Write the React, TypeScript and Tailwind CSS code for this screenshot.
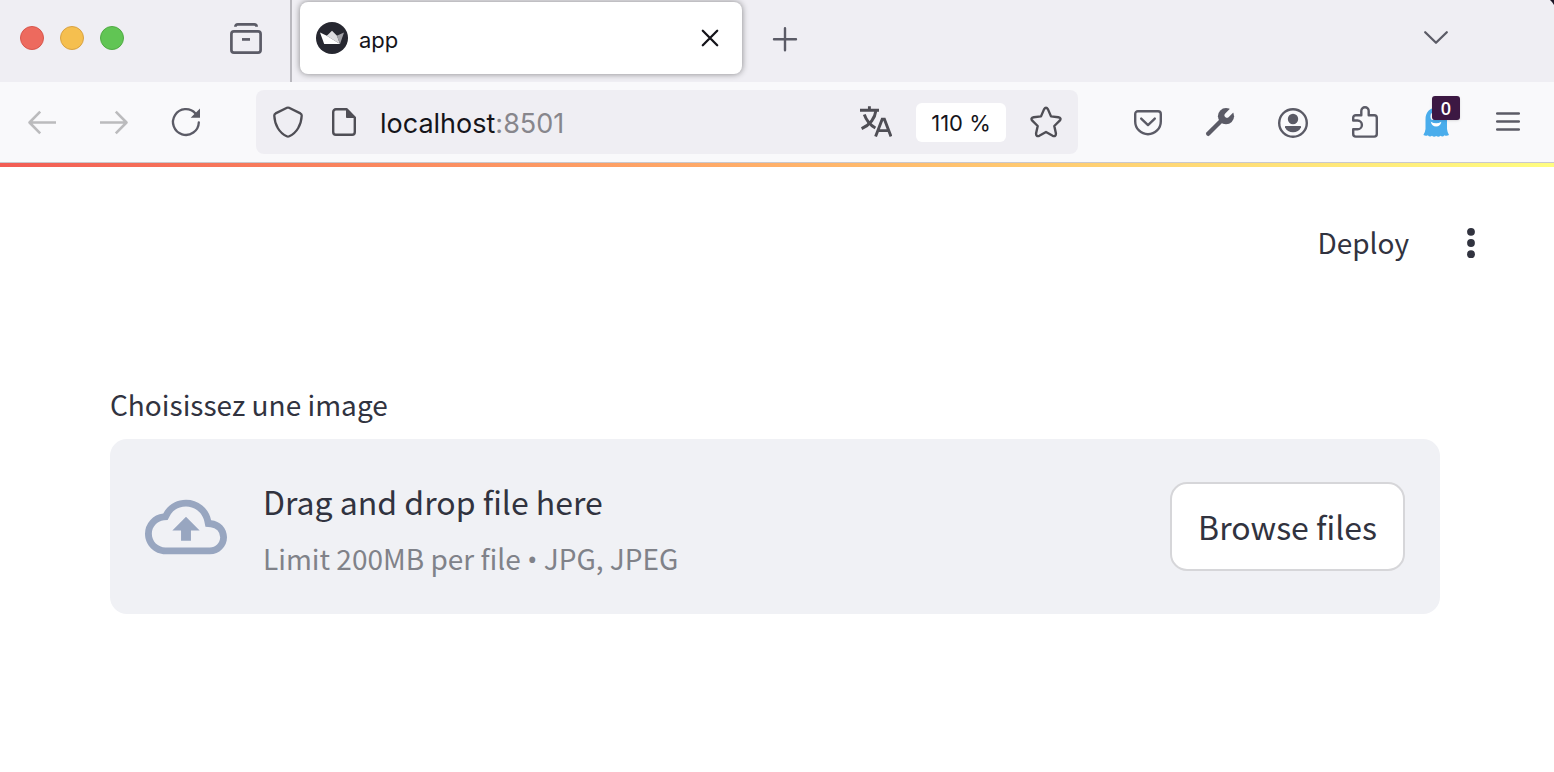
import type { ReactNode } from "react";

type IconProps = { children: ReactNode; color?: string; width?: number };

function Icon({ children, color = "#5b5b66", width = 2.4 }: IconProps) {
  return (
    <svg
      className="block h-8 w-8 shrink-0"
      viewBox="0 0 32 32"
      fill="none"
      stroke={color}
      strokeWidth={width}
      strokeLinecap="round"
      strokeLinejoin="round"
      aria-hidden="true"
    >
      {children}
    </svg>
  );
}

function IconButton({ label, children }: { label: string; children: ReactNode }) {
  return (
    <button type="button" aria-label={label} className="relative block h-8 w-8 shrink-0">
      {children}
    </button>
  );
}

function TabStrip() {
  return (
    <div className="relative flex h-[82px] items-stretch bg-[#efeef3]">
      <div className="flex items-center gap-4 pb-[6px] pl-5">
        <button type="button" aria-label="Close window" className="h-6 w-6 rounded-full border border-[#d8564c] bg-[#ed6a5e]" />
        <button type="button" aria-label="Minimize window" className="h-6 w-6 rounded-full border border-[#d9a243] bg-[#f5bf4f]" />
        <button type="button" aria-label="Zoom window" className="h-6 w-6 rounded-full border border-[#51ab44] bg-[#61c554]" />
      </div>
      <div className="ml-[106px] flex items-center pb-[6px]">
        <IconButton label="Recent browsing">
          <Icon width={2.7}>
            <rect x="1.4" y="9.4" width="29.2" height="21.2" rx="2.6" />
            <path d="M5.4 4.7c0-1.6.8-2.3 2.4-2.3h16.4c1.6 0 2.4.7 2.4 2.3" strokeLinecap="butt" />
            <path d="M12 17.4h8" strokeLinecap="butt" />
          </Icon>
        </IconButton>
      </div>
      <div className="ml-7 w-[2px] bg-[#b9b8be]" />
      <div className="mb-2 ml-2 mt-[2px] flex w-[442px] items-center rounded-lg bg-white px-4 shadow-[0_0_6px_rgba(0,0,0,0.45)]">
        <svg className="h-8 w-8 shrink-0" viewBox="0 0 32 32" aria-hidden="true">
          <circle cx="16" cy="16" r="16" fill="#262730" />
          <path d="M10.800 13.800L16 8.700l5 5.100 3 8.200z" fill="#dcdcdf" />
          <path d="M20.800 13.800l7.200-3.200L24 22z" fill="#a0a0a5" />
          <path d="M4 10.600l6.800 3.200L24 22H8.200z" fill="#fff" />
        </svg>
        <span className="ml-[11px] flex-1 pt-1 text-[22px] leading-7 text-[#15141a]">app</span>
        <IconButton label="Close tab">
          <Icon color="#15141a" width={2.3}>
            <path d="M8.8 8.8l14.400 14.400M23.200 8.800L8.800 23.200" />
          </Icon>
        </IconButton>
      </div>
      <div className="ml-[27px] flex flex-1 items-center justify-between pb-1 pr-[102px]">
        <IconButton label="New tab">
          <Icon>
            <path d="M16 5.200v22M5 16.200h22" />
          </Icon>
        </IconButton>
        <IconButton label="List all tabs">
          <Icon width={2.3}>
            <path d="M5.200 9.200L16 19.800 26.800 9.200" />
          </Icon>
        </IconButton>
      </div>
      <svg className="absolute right-0 top-0 h-[5px] w-1" viewBox="0 0 4 5" aria-hidden="true">
        <path d="M0 0h4v5Q2.500 2 0 0z" fill="#1c1626" />
      </svg>
    </div>
  );
}

function AddressBar() {
  return (
    <div className="flex h-16 flex-1 items-center rounded-lg bg-[#efeef3] px-4">
      <IconButton label="Tracking protection">
        <Icon color="#4f4e55" width={2.3}>
          <path d="M15 1.8q1-.5 2 0l11.400 5.600q1.400.8 1.300 2.400C29.300 19 24.600 27 17.300 30.300q-1.300.6-2.600 0C7.400 27 2.700 19 2.300 9.800q-.1-1.600 1.300-2.400z" />
        </Icon>
      </IconButton>
      <div className="ml-6">
        <IconButton label="Site information">
          <Icon color="#4f4e55" width={2.4}>
            <path d="M18.500 3.200H7.900a2.700 2.700 0 0 0-2.700 2.700v20.200a2.700 2.700 0 0 0 2.700 2.700h16.200a2.700 2.700 0 0 0 2.700-2.700V11.500z" />
            <path d="M18.500 3.200v8.300h8.300z" fill="#4f4e55" strokeWidth="1" />
          </Icon>
        </IconButton>
      </div>
      <div className="ml-5 flex-1 pt-1 text-[27px] leading-8 text-[#15141a]">
        localhost<span className="text-[#87868c]">:8501</span>
      </div>
      <IconButton label="Translate page">
        <Icon color="#4f4e55" width={2.9}>
          <g strokeLinecap="butt" strokeLinejoin="miter">
            <path d="M0 4.200h19M9.400.2v4" />
            <path d="M16 4.200C15 12 9.500 19 1.600 22.600" />
            <path d="M4.300 8.500C6.200 14 10 19 15.400 22" />
            <path d="M15.600 30.400L22.200 13.200h2.200L31 30.400M18 24.600h10.600" />
          </g>
        </Icon>
      </IconButton>
      <button type="button" className="ml-6 flex h-[39px] w-[90px] items-center justify-center rounded-md bg-white pt-[2px] text-[22px] leading-7 text-[#15141a]">
        110 %
      </button>
      <div className="ml-6">
        <IconButton label="Bookmark this page">
          <Icon color="#4f4e55" width={2.400}>
            <path d="M14 3.400q2-3.200 4 0l3 7 7.300.8q3.500.7 1.400 3.500L24.300 20l1.600 7.300q.2 3.700-3.200 2.500L16 26l-6.700 3.800q-3.400 1.200-3.200-2.500L7.700 20l-5.400-5.300q-2.100-2.800 1.400-3.500l7.300-.8z" />
          </Icon>
        </IconButton>
      </div>
    </div>
  );
}

function NavBar() {
  return (
    <div className="flex h-[81px] items-center gap-[54px] border-b border-[#c9c8ce] bg-[#f9f9fb] pl-[26px] pr-[30px]">
      <div className="flex gap-10">
        <IconButton label="Go back">
          <Icon color="#bbbbbd" width={2.600}>
            <path d="M30 16.500H3.500M14.200 5.700L3.500 16.500l10.700 10.800" strokeLinecap="butt" />
          </Icon>
        </IconButton>
        <IconButton label="Go forward">
          <Icon color="#bbbbbd" width={2.600}>
            <path d="M2 16.500h26.500M17.800 5.700l10.700 10.800-10.700 10.800" strokeLinecap="butt" />
          </Icon>
        </IconButton>
        <IconButton label="Reload">
          <Icon width={2.300}>
            <path d="M28.800 16.500A12.900 12.900 0 1 1 25.500 7.400" />
            <path d="M30 2.400v9.300h-9.300z" fill="#5b5b66" stroke="none" />
          </Icon>
        </IconButton>
      </div>
      <AddressBar />
      <div className="flex gap-10">
        <IconButton label="Save to Pocket">
          <Icon>
            <path d="M5.900 5.200h20.200a2.700 2.700 0 0 1 2.700 2.700v7.500a12.800 12.800 0 0 1-25.600 0V7.900a2.700 2.700 0 0 1 2.700-2.700z" />
            <path d="M9.200 12.600l6.800 6.500 6.800-6.500" />
          </Icon>
        </IconButton>
        <IconButton label="Developer tools">
          <Icon>
            <path d="M4.200 27.800L17.500 14.500" strokeWidth="4.400" />
            <circle cx="22" cy="10.200" r="8.100" fill="#5b5b66" stroke="none" />
            <path d="M23 9.200l8-8" stroke="#f9f9fb" strokeWidth="5" />
          </Icon>
        </IconButton>
        <IconButton label="Account">
          <Icon>
            <circle cx="17" cy="17" r="13.800" />
            <g fill="#5b5b66" stroke="none">
              <circle cx="17" cy="13" r="5.200" />
              <path d="M9.800 20h14.400q1.200 0 .8 1.200C23.800 24.500 20.500 26.200 17 26.200s-6.800-1.700-8-5q-.4-1.200.8-1.200z" />
            </g>
          </Icon>
        </IconButton>
        <IconButton label="Extensions">
          <Icon>
            <path d="M13.300 9.200V5a3.700 3.700 0 0 1 7.400 0v4.200h5.500a2.600 2.600 0 0 1 2.600 2.600V28a2.600 2.600 0 0 1-2.600 2.600H7.800A2.600 2.600 0 0 1 5.200 28v-4.700h4.300a4.400 4.400 0 0 0 0-8.800H5.200v-2.700a2.600 2.600 0 0 1 2.600-2.600z" />
          </Icon>
        </IconButton>
        <IconButton label="Ghostery, 0 trackers blocked">
          <Icon>
            <path
              d="M5.500 13.500C5.500 6 10 1.800 16.200 1.800S27 6 27 13.500v9.500q.4 3.500 2 6-2.500 1.500-4.500.200-1.800 2.300-4 .6-2 1.800-4.300.2-2.200 1.600-4.200-.2-2.300 1.700-4.200-.6-2 1.300-4.400-.2 1.700-2.500 2.100-6z"
              fill="#4aadec"
              stroke="none"
            />
            <g fill="#fff" stroke="none">
              <ellipse cx="12.500" cy="10.500" rx="2" ry="3.400" />
              <path d="M10.800 15.800q5.300 3 10.600 0-1 4.800-5.300 4.800t-5.300-4.800z" />
            </g>
          </Icon>
          <span className="absolute -top-[10px] left-3 flex h-6 w-7 items-center justify-center rounded-[3px] bg-[#3c1843] font-['Open_Sans',sans-serif] text-[18px] font-semibold leading-6 text-white shadow-sm">
            0
          </span>
        </IconButton>
        <IconButton label="Open application menu">
          <Icon width={2.500}>
            <path d="M5.200 7.500h21.600M5.200 15.500h21.600M5.200 23.500h21.600" />
          </Icon>
        </IconButton>
      </div>
    </div>
  );
}

function Uploader() {
  return (
    <section className="flex flex-col gap-4">
      <h2 id="upload-label" className="text-[28px] leading-[38px]">Choisissez une image</h2>
      <div
        aria-labelledby="upload-label"
        role="group"
        className="flex min-h-[175px] items-center rounded-[17px] bg-[#f0f1f5] px-[35px]"
      >
        <svg className="h-[82px] w-[82px] shrink-0" viewBox="0 0 24 24" fill="#98a6c0" aria-hidden="true">
          <path d="M19.350 10.040A7.490 7.490 0 0 0 12 4C9.110 4 6.600 5.640 5.350 8.040A5.994 5.994 0 0 0 0 14c0 3.310 2.690 6 6 6h13c2.760 0 5-2.240 5-5 0-2.640-2.050-4.780-4.650-4.960zM19 18H6c-2.210 0-4-1.790-4-4 0-2.050 1.530-3.760 3.560-3.970l1.070-.110.500-.950A5.469 5.469 0 0 1 12 6c2.620 0 4.880 1.860 5.390 4.430l.3 1.500 1.530.110A2.980 2.980 0 0 1 22 15c0 1.650-1.350 3-3 3zM8 13h2.550v3h2.900v-3H16l-4-4z" />
        </svg>
        <div className="ml-9 flex flex-1 flex-col gap-3">
          <span className="text-[32px] leading-[52px]">Drag and drop file here</span>
          <span className="text-[28px] leading-[38px] text-[#808289]">
            Limit 200MB per file <span className="font-['Open_Sans',sans-serif]">•</span> JPG, JPEG
          </span>
        </div>
        <button type="button" className="rounded-[17px] border-2 border-[#d6d6d9] bg-white px-[26px] py-4 text-[32px] leading-[53px]">
          Browse files
        </button>
      </div>
    </section>
  );
}

export default function App() {
  return (
    <div className="min-h-screen bg-white font-['Inter',sans-serif]">
      <header>
        <TabStrip />
        <NavBar />
      </header>
      <div className="h-1 bg-linear-to-r from-[#f25c54] to-[#fffd80]" />
      <div className="font-['Noto_Sans_CJK_SC',sans-serif] text-[#31333f]">
        <div className="flex items-start justify-end gap-[46px] pr-[67px] pt-14">
          <button type="button" className="text-[28px] leading-[38px]">Deploy</button>
          <button type="button" aria-label="Main menu" className="py-1">
            <svg className="block h-8 w-8" viewBox="0 0 32 32" fill="#31333f" aria-hidden="true">
              <circle cx="16" cy="4.800" r="3.900" />
              <circle cx="16" cy="16" r="3.900" />
              <circle cx="16" cy="27.200" r="3.900" />
            </svg>
          </button>
        </div>
        <main className="pl-[110px] pr-[114px] pt-[122px]">
          <Uploader />
        </main>
      </div>
    </div>
  );
}
